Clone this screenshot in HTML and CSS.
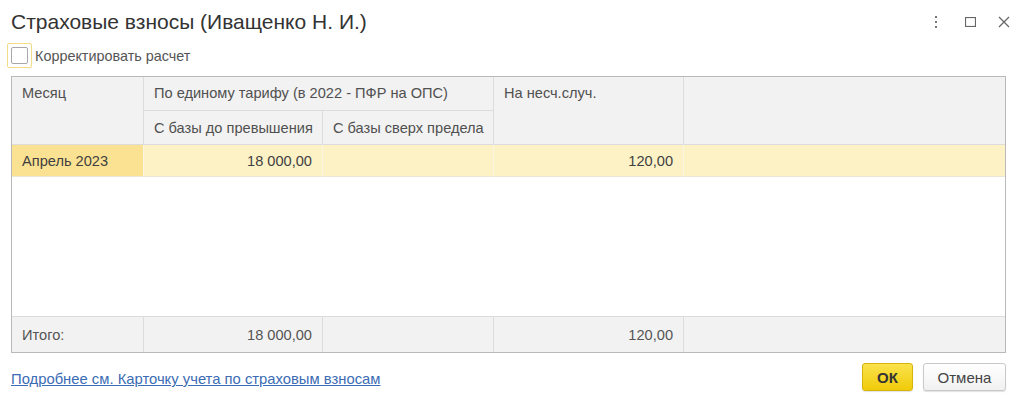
FILE: index.html
```html
<!DOCTYPE html>
<html lang="ru">
<head>
<meta charset="utf-8">
<title>Страховые взносы</title>
<link rel="stylesheet" href="styles.css">
</head>
<body>
<div class="dialog">
  <header class="titlebar">
    <h1 class="title">Страховые взносы (Иващенко Н. И.)</h1>
    <div class="win-controls">
      <span class="ctl ctl-more" aria-label="Ещё">
        <svg width="4" height="12" viewBox="0 0 4 12"><rect x="1" y="0" width="2" height="2" fill="#777"/><rect x="1" y="5" width="2" height="2" fill="#777"/><rect x="1" y="10" width="2" height="2" fill="#777"/></svg>
      </span>
      <span class="ctl ctl-max" aria-label="Развернуть">
        <svg width="11" height="10" viewBox="0 0 11 10"><rect x="0.5" y="0.5" width="10" height="9" fill="none" stroke="#666" stroke-width="1.2"/></svg>
      </span>
      <span class="ctl ctl-close" aria-label="Закрыть">
        <svg width="12" height="12" viewBox="0 0 12 12"><path d="M1 1 L11 11 M11 1 L1 11" stroke="#666" stroke-width="1.3" fill="none"/></svg>
      </span>
    </div>
  </header>

  <label class="check-row">
    <span class="focus-frame"><span class="checkbox"></span></span>
    <span class="check-label">Корректировать расчет</span>
  </label>

  <div class="grid-box">
    <div class="grid">
      <div class="cell head h-month">Месяц</div>
      <div class="cell head h-tariff">По единому тарифу (в 2022 - ПФР на ОПС)</div>
      <div class="cell head h-base mid">С базы до превышения</div>
      <div class="cell head h-over mid">С базы сверх предела</div>
      <div class="cell head h-acc">На несч.случ.</div>
      <div class="cell head h-empty"></div>

      <div class="cell row sel-first">Апрель 2023</div>
      <div class="cell row num">18 000,00</div>
      <div class="cell row"></div>
      <div class="cell row num">120,00</div>
      <div class="cell row last"></div>

      <div class="spacer"></div>

      <div class="cell foot">Итого:</div>
      <div class="cell foot num">18 000,00</div>
      <div class="cell foot"></div>
      <div class="cell foot num">120,00</div>
      <div class="cell foot last"></div>
    </div>
  </div>

  <footer class="bottom">
    <a class="more-link" href="#">Подробнее см. Карточку учета по страховым взносам</a>
    <div class="buttons">
      <button class="btn btn-ok">ОК</button>
      <button class="btn btn-cancel">Отмена</button>
    </div>
  </footer>
</div>
</body>
</html>
```

FILE: styles.css
```css
* { box-sizing: border-box; }

html, body {
  margin: 0;
  padding: 0;
  background: #fff;
}

body {
  font-family: "Liberation Sans", Arial, sans-serif;
  color: #444;
  width: 1024px;
  height: 404px;
  overflow: hidden;
}

.dialog {
  display: flex;
  flex-direction: column;
  padding: 0 8px 0 11px;
}

.titlebar {
  display: flex;
  align-items: center;
  justify-content: space-between;
  height: 42px;
  padding-top: 1px;
}

.title {
  margin: 0;
  font-weight: normal;
  font-size: 21px;
  color: #333;
  margin-top: 1px;
}

.win-controls {
  display: flex;
  align-items: center;
}

.ctl {
  display: flex;
  align-items: center;
  justify-content: center;
  height: 20px;
}

.ctl-more { width: 20px; margin-right: 12px; }
.ctl-max { width: 24px; margin-right: 10px; }
.ctl-close { width: 24px; }

.check-row {
  display: flex;
  align-items: center;
  height: 25px;
  margin-left: -4px;
  margin-top: 1px;
}

.focus-frame {
  width: 25px;
  height: 25px;
  border: 1px solid #f2dc86;
  border-radius: 2px;
  display: flex;
  align-items: center;
  justify-content: center;
}

.checkbox {
  width: 17px;
  height: 17px;
  border: 1px solid #a8a8a8;
  border-radius: 2px;
  background: #fff;
}

.check-label {
  font-size: 14.4px;
  color: #555;
  margin-left: 3px;
}

.grid-box {
  margin-top: 8px;
  width: 995px;
  height: 277px;
  border: 1px solid #b9b9b9;
}

.grid {
  display: grid;
  grid-template-columns: 132px 179px 171px 190px 1fr;
  grid-template-rows: 34px 34px 32px 1fr 36px;
  height: 100%;
  font-size: 14.6px;
  color: #4a4a4a;
}

.cell {
  padding: 0 10px;
  display: flex;
  align-items: center;
  white-space: nowrap;
  overflow: hidden;
}

.head {
  background: #f2f2f2;
  border-right: 1px solid #dcdcdc;
  border-bottom: 1px solid #dcdcdc;
  align-items: flex-start;
  padding-top: 8px;
  color: #505050;
}

.head.mid { align-items: center; padding-top: 0; }

.h-month { grid-row: 1 / 3; grid-column: 1; }
.h-tariff { grid-row: 1; grid-column: 2 / 4; }
.h-base { grid-row: 2; grid-column: 2; }
.h-over { grid-row: 2; grid-column: 3; }
.h-acc { grid-row: 1 / 3; grid-column: 4; }
.h-empty { grid-row: 1 / 3; grid-column: 5; }

.row {
  background: #fdf1c6;
  border-right: 1px solid #fbf6e4;
  border-bottom: 1px solid #ebe6d6;
  color: #3f3f3f;
}

.row.sel-first { background: #fbe293; }

.num { justify-content: flex-end; }

.spacer {
  grid-column: 1 / -1;
  background: #fff;
}

.foot {
  background: #f2f2f2;
  border-top: 1px solid #dcdcdc;
  border-right: 1px solid #dcdcdc;
  color: #555;
}

.cell.last, .cell.h-empty { border-right: none; }

.bottom {
  display: flex;
  align-items: center;
  justify-content: space-between;
  margin-top: 10px;
  width: 995px;
}

.more-link {
  font-size: 14.8px;
  color: #3b6cb4;
  text-decoration: underline;
  margin-top: 4px;
}

.buttons {
  display: flex;
  gap: 10px;
}

.btn {
  font-family: "Liberation Sans", Arial, sans-serif;
  font-size: 15px;
  height: 28px;
  border-radius: 3px;
  padding: 0;
  cursor: pointer;
}

.btn-ok {
  width: 51px;
  background: linear-gradient(#fae24c, #f0cb0a);
  border: 1px solid #d6b40c;
  color: #333;
  font-weight: bold;
  box-shadow: 0 1px 1px rgba(0,0,0,0.12);
}

.btn-cancel {
  width: 83px;
  background: linear-gradient(#ffffff, #f1f1f1);
  border: 1px solid #c9c9c9;
  color: #444;
  box-shadow: 0 1px 1px rgba(0,0,0,0.12);
}
```
